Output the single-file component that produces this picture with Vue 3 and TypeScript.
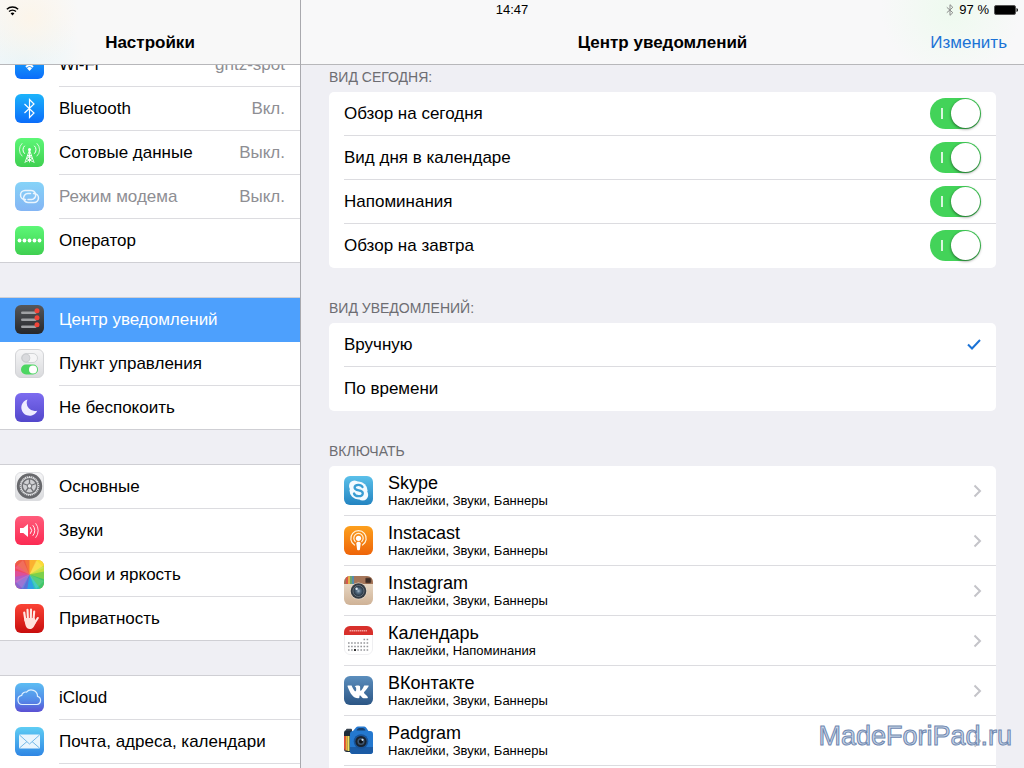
<script setup lang="ts">
import { ref } from 'vue'

interface MenuItem {
  icon: string
  label: string
  value?: string
  disabled?: boolean
}

interface AppItem {
  icon: string
  name: string
  styles: string
}

const menu: MenuItem[][] = [
  [
    { icon: 'wifi', label: 'Wi-Fi', value: 'gritz-spot' },
    { icon: 'bluetooth', label: 'Bluetooth', value: 'Вкл.' },
    { icon: 'cellular', label: 'Сотовые данные', value: 'Выкл.' },
    { icon: 'hotspot', label: 'Режим модема', value: 'Выкл.', disabled: true },
    { icon: 'carrier', label: 'Оператор' },
  ],
  [
    { icon: 'notifications', label: 'Центр уведомлений' },
    { icon: 'control', label: 'Пункт управления' },
    { icon: 'dnd', label: 'Не беспокоить' },
  ],
  [
    { icon: 'general', label: 'Основные' },
    { icon: 'sounds', label: 'Звуки' },
    { icon: 'wallpaper', label: 'Обои и яркость' },
    { icon: 'privacy', label: 'Приватность' },
  ],
  [
    { icon: 'icloud', label: 'iCloud' },
    { icon: 'mail', label: 'Почта, адреса, календари' },
  ],
]

const active = ref('notifications')

const today = ref([
  { id: 'summary', label: 'Обзор на сегодня', on: true },
  { id: 'day', label: 'Вид дня в календаре', on: true },
  { id: 'reminders', label: 'Напоминания', on: true },
  { id: 'tomorrow', label: 'Обзор на завтра', on: true },
])

const sortModes = [
  { id: 'manual', label: 'Вручную' },
  { id: 'time', label: 'По времени' },
]
const sortMode = ref('manual')

const full = 'Наклейки, Звуки, Баннеры'
const apps: AppItem[] = [
  { icon: 'skype', name: 'Skype', styles: full },
  { icon: 'instacast', name: 'Instacast', styles: full },
  { icon: 'instagram', name: 'Instagram', styles: full },
  { icon: 'calendar', name: 'Календарь', styles: 'Наклейки, Напоминания' },
  { icon: 'vk', name: 'ВКонтакте', styles: full },
  { icon: 'padgram', name: 'Padgram', styles: full },
]
</script>

<template>
  <div class="screen">
    <svg class="sprite" width="0" height="0" aria-hidden="true">
      <defs>
        <linearGradient id="g-blue" x1="0" y1="0" x2="0" y2="1"><stop offset="0" stop-color="#1cb4fb" /><stop offset="1" stop-color="#0b6cfa" /></linearGradient>
        <linearGradient id="g-green" x1="0" y1="0" x2="0" y2="1"><stop offset="0" stop-color="#5df777" /><stop offset="1" stop-color="#3fcf50" /></linearGradient>
        <linearGradient id="g-pale" x1="0" y1="0" x2="0" y2="1"><stop offset="0" stop-color="#86d3f8" /><stop offset="1" stop-color="#84b5f4" /></linearGradient>
        <linearGradient id="g-dark" x1="0" y1="0" x2="0" y2="1"><stop offset="0" stop-color="#55575b" /><stop offset="1" stop-color="#26272a" /></linearGradient>
        <linearGradient id="g-light" x1="0" y1="0" x2="0" y2="1"><stop offset="0" stop-color="#f6f6f7" /><stop offset="1" stop-color="#d9dadd" /></linearGradient>
        <linearGradient id="g-violet" x1="0" y1="0" x2="0" y2="1"><stop offset="0" stop-color="#7d6cf0" /><stop offset="1" stop-color="#5247cb" /></linearGradient>
        <linearGradient id="g-pink" x1="0" y1="0" x2="0" y2="1"><stop offset="0" stop-color="#ff5c7b" /><stop offset="1" stop-color="#fb2a52" /></linearGradient>
        <linearGradient id="g-red" x1="0" y1="0" x2="0" y2="1"><stop offset="0" stop-color="#fb4436" /><stop offset="1" stop-color="#c80d0d" /></linearGradient>
        <linearGradient id="g-cloud" x1="0" y1="0" x2="0" y2="1"><stop offset="0" stop-color="#5cbdf3" /><stop offset="0.6" stop-color="#538be8" /><stop offset="1" stop-color="#5b4fd3" /></linearGradient>
        <linearGradient id="g-mail" x1="0" y1="0" x2="0" y2="1"><stop offset="0" stop-color="#5fcdf4" /><stop offset="1" stop-color="#2f86e4" /></linearGradient>
        <linearGradient id="g-skype" x1="0" y1="0" x2="0" y2="1"><stop offset="0" stop-color="#5bc0ea" /><stop offset="1" stop-color="#2384c1" /></linearGradient>
        <linearGradient id="g-orange" x1="0" y1="0" x2="0" y2="1"><stop offset="0" stop-color="#fda01d" /><stop offset="1" stop-color="#ee6409" /></linearGradient>
        <linearGradient id="g-vk" x1="0" y1="0" x2="0" y2="1"><stop offset="0" stop-color="#5b8ebd" /><stop offset="1" stop-color="#2c5685" /></linearGradient>
        <linearGradient id="g-cream" x1="0" y1="0" x2="0" y2="1"><stop offset="0" stop-color="#efe3d2" /><stop offset="1" stop-color="#cfb296" /></linearGradient>
        <radialGradient id="g-lens"><stop offset="0" stop-color="#a8bccb" /><stop offset="0.35" stop-color="#5a7186" /><stop offset="1" stop-color="#1d2a37" /></radialGradient>
        <clipPath id="tile"><rect width="29" height="29" rx="6" /></clipPath>
      </defs>

      <symbol id="i-wifi" viewBox="0 0 29 29">
        <rect width="29" height="29" rx="6" fill="url(#g-blue)" />
        <g fill="none" stroke="#fff" stroke-width="2">
          <path d="M5 11a13.500 13.500 0 0 1 19 0" /><path d="M8 14.200a9.300 9.300 0 0 1 13 0" /><path d="M11 17a5 5 0 0 1 7 0" />
        </g>
        <path d="M12 18.200a3.600 3.600 0 0 1 5 0L14.500 21z" fill="#fff" />
      </symbol>

      <symbol id="i-bluetooth" viewBox="0 0 29 29">
        <rect width="29" height="29" rx="6" fill="url(#g-blue)" />
        <path d="M9.500 10l9.500 9-4.500 4.500v-18L19 10l-9.500 9" fill="none" stroke="#fff" stroke-width="1.200" />
      </symbol>

      <symbol id="i-cellular" viewBox="0 0 29 29">
        <rect width="29" height="29" rx="6" fill="url(#g-green)" />
        <g fill="none" stroke="#fff" stroke-linecap="round">
          <path d="M7 5.500a8.500 8.500 0 0 0 0 12.500M22 5.500a8.500 8.500 0 0 1 0 12.500" stroke-opacity=".75" />
          <path d="M9.500 8a5 5 0 0 0 0 7.500M19.500 8a5 5 0 0 1 0 7.500" />
          <path d="M14.500 12L10 24.500M14.500 12L19 24.500M14.500 12v12M12.500 17.500h4M11.500 20.500l6 3M17.500 20.500l-6 3M12.500 17.500l5 3M16.500 17.500l-5 3" stroke-width=".9" />
        </g>
        <circle cx="14.500" cy="11.500" r="1.500" fill="#fff" />
      </symbol>

      <symbol id="i-hotspot" viewBox="0 0 29 29">
        <rect width="29" height="29" rx="6" fill="url(#g-pale)" />
        <g fill="none" stroke="#eaf5fe" stroke-width="1.500" stroke-linecap="round">
          <path d="M10.500 17.500H10a4.500 4.500 0 0 1 0-9h6a4.500 4.500 0 0 1 3.500 7.500" />
          <path d="M18.500 11.500h.5a4.500 4.500 0 0 1 0 9h-6a4.500 4.500 0 0 1-3.500-7.300c.9-1.200 2-1.700 3.500-1.700h2.500" />
          <path d="M13 17.500h3.500a3.500 3.500 0 0 0 3-1.500" />
        </g>
      </symbol>

      <symbol id="i-carrier" viewBox="0 0 29 29">
        <rect width="29" height="29" rx="6" fill="url(#g-green)" />
        <g fill="#fff"><circle cx="4.500" cy="14.500" r="1.900" /><circle cx="9.500" cy="14.500" r="1.900" /><circle cx="14.500" cy="14.500" r="1.900" /><circle cx="19.500" cy="14.500" r="1.900" /><circle cx="24.500" cy="14.500" r="1.900" /></g>
      </symbol>

      <symbol id="i-notifications" viewBox="0 0 29 29">
        <rect width="29" height="29" rx="6" fill="url(#g-dark)" />
        <g fill="#a0a1a4"><rect x="6" y="6.500" width="15.500" height="2.600" rx="1.300" /><rect x="6" y="13.500" width="15.500" height="2.600" rx="1.300" /><rect x="6" y="20.500" width="15.500" height="2.600" rx="1.300" /></g>
        <g fill="#f04438"><circle cx="22" cy="5.800" r="2.500" /><circle cx="22" cy="12.800" r="2.500" /><circle cx="22" cy="19.800" r="2.500" /></g>
      </symbol>

      <symbol id="i-control" viewBox="0 0 29 29">
        <rect x=".5" y=".5" width="28" height="28" rx="5.500" fill="url(#g-light)" stroke="#d3d4d7" />
        <rect x="6.500" y="4.500" width="16" height="9" rx="4.500" fill="#f5f5f6" stroke="#c9cbce" stroke-width=".8" />
        <circle cx="11" cy="9" r="4" fill="#d9dadd" stroke="#bfc1c4" stroke-width=".6" />
        <rect x="6" y="15.500" width="17" height="10" rx="5" fill="#4dd662" />
        <circle cx="18" cy="20.500" r="4" fill="#fff" />
      </symbol>

      <symbol id="i-dnd" viewBox="0 0 29 29">
        <rect width="29" height="29" rx="6" fill="url(#g-violet)" />
        <path d="M12.500 6.500a8.300 8.300 0 1 0 9.800 11.200A8.200 8.200 0 0 1 12.500 6.500z" fill="#eeecff" />
      </symbol>

      <symbol id="i-general" viewBox="0 0 29 29">
        <rect x=".5" y=".5" width="28" height="28" rx="5.500" fill="url(#g-light)" stroke="#dcdde0" />
        <circle cx="14.500" cy="14" r="11.300" fill="#e3e4e6" stroke="#68696d" stroke-width="2.800" />
        <circle cx="14.500" cy="14" r="9.300" fill="none" stroke="#77787c" stroke-width="1.200" stroke-dasharray="1 1" />
        <circle cx="14.500" cy="14" r="7.300" fill="#d0d1d4" stroke="#707175" stroke-width="1.600" />
        <path d="M14.500 14V7M14.500 14l6.500-2.500M14.500 14l4.200 5.800M14.500 14l-4.200 5.800M14.500 14L8 11.500" stroke="#707175" stroke-width="1.300" />
        <circle cx="14.500" cy="14" r="2.300" fill="#e3e4e6" stroke="#707175" />
      </symbol>

      <symbol id="i-sounds" viewBox="0 0 29 29">
        <rect width="29" height="29" rx="6" fill="url(#g-pink)" />
        <path d="M5 12h3.300l4.700-4v13l-4.700-4H5z" fill="#fff" />
        <g fill="none" stroke="#fff" stroke-linecap="round"><path d="M15.500 11.500a4.500 4.500 0 0 1 0 6" /><path d="M18 9.500a7.500 7.500 0 0 1 0 10" stroke-opacity=".9" /><path d="M20.800 7.500a11 11 0 0 1 0 14" stroke-opacity=".8" /></g>
      </symbol>

      <symbol id="i-wallpaper" viewBox="0 0 29 29">
        <g clip-path="url(#tile)">
          <rect width="29" height="29" fill="#f59a35" />
          <path d="M14.500 14.500L8-2h8z" fill="#f5743c" /><path d="M14.500 14.500L14.500-2H24z" fill="#fbb22f" />
          <path d="M14.500 14.500L23-2h8v8z" fill="#fbdc38" /><path d="M14.500 14.500L31 4v9z" fill="#c9de3c" />
          <path d="M14.500 14.500L31 11v11z" fill="#7ed04b" /><path d="M14.500 14.500L31 20v11h-6z" fill="#3fc76c" />
          <path d="M14.500 14.500L27 31h-9z" fill="#2cc3b9" /><path d="M14.500 14.500L20 31h-9z" fill="#2e9fe6" />
          <path d="M14.500 14.500L12 31H3z" fill="#5a72d8" /><path d="M14.500 14.500L5 31h-7v-8z" fill="#8d63cf" />
          <path d="M14.500 14.500L-2 25V15z" fill="#b55bc2" /><path d="M14.500 14.500L-2 17V8z" fill="#de4f97" />
          <path d="M14.500 14.500L-2 10V0z" fill="#f04a62" /><path d="M14.500 14.500L-2 2v-4H9z" fill="#ee5a45" />
          <path d="M0 8l14.500 6.500L8 0M21 0l-6.500 14.500L29 8M29 21l-14.500-6.500L21 29M8 29l6.500-14.500L0 21" fill="#fff" fill-opacity=".12" />
        </g>
      </symbol>

      <symbol id="i-privacy" viewBox="0 0 29 29">
        <rect width="29" height="29" rx="6" fill="url(#g-red)" />
        <g fill="none" stroke="#ffe9e4" stroke-width="2.100" stroke-linecap="round"><path d="M9.200 8.500l1.200 8M12.500 5.800l.4 9M16 5.500l-.2 9M19.200 7.500l-.8 9M22.800 14l-3.500 5.500" /></g>
        <path d="M9.300 14h10.100l1.600 3.200c-1 4-2.700 7.800-6.200 7.800-4 0-4.800-4.500-5.500-11z" fill="#ffe2dc" />
      </symbol>

      <symbol id="i-icloud" viewBox="0 0 29 29">
        <rect width="29" height="29" rx="6" fill="url(#g-cloud)" />
        <path d="M7.200 21.500a4.600 4.600 0 0 1-.5-9.100 4 4 0 0 1 4.800-3.300 6.300 6.300 0 0 1 11 4.200 4.200 4.200 0 0 1-.5 8.200z" fill="none" stroke="#dff0ff" stroke-width="1.200" />
      </symbol>

      <symbol id="i-mail" viewBox="0 0 29 29">
        <rect width="29" height="29" rx="6" fill="url(#g-mail)" />
        <rect x="4" y="7.500" width="21" height="14" rx="1" fill="#e9f5fd" />
        <path d="M4.500 8l10 9 10-9M4.500 21l7.500-6.500M24.500 21L17 14.500" fill="none" stroke="#74b9e8" />
      </symbol>

      <symbol id="i-skype" viewBox="0 0 29 29">
        <rect width="29" height="29" rx="6" fill="url(#g-skype)" />
        <circle cx="14.500" cy="14.500" r="9" fill="#f3faff" /><circle cx="10.500" cy="10" r="5.500" fill="#f3faff" /><circle cx="18.700" cy="19" r="5.500" fill="#f3faff" />
        <path d="M18.500 11c-.8-1.500-2.200-2.200-4-2.200-2.300 0-3.900 1-3.900 2.700 0 4.200 8.200 1.600 8.200 5.700 0 1.900-1.800 3-4.300 3-2.200 0-3.900-1-4.500-2.700" fill="none" stroke="#3a9dd3" stroke-width="2.300" stroke-linecap="round" />
      </symbol>

      <symbol id="i-instacast" viewBox="0 0 29 29">
        <rect width="29" height="29" rx="6" fill="url(#g-orange)" />
        <g fill="none" stroke="#fff3dd" stroke-width="1.200" stroke-linecap="round"><path d="M10.500 19a7.700 7.700 0 1 1 8 0" /><path d="M11.200 15.500a4.700 4.700 0 1 1 6.600 0" /></g>
        <circle cx="14.500" cy="12.300" r="2.600" fill="#fff" />
        <path d="M12.300 17.500c0-1.300 1-1.800 2.200-1.800s2.200.5 2.200 1.800l-.7 5.800c-.2 1.400-2.800 1.400-3 0z" fill="#fff" />
      </symbol>

      <symbol id="i-instagram" viewBox="0 0 29 29">
        <g clip-path="url(#tile)">
          <rect width="29" height="29" fill="url(#g-cream)" />
          <rect width="29" height="8" fill="#a5765a" />
          <rect x="2" width="2" height="8" fill="#d8574a" /><rect x="4" width="2" height="8" fill="#e0b24c" /><rect x="6" width="2" height="8" fill="#6da36c" /><rect x="8" width="2" height="8" fill="#568cad" />
          <rect x="21.500" y="2" width="5.500" height="5" rx="1" fill="#3d2c26" stroke="#6b4a3a" stroke-width=".7" />
          <circle cx="14.500" cy="15" r="8.600" fill="#e5d8c8" /><circle cx="14.500" cy="15" r="7.800" fill="#343b43" />
          <circle cx="14.500" cy="15" r="5.500" fill="url(#g-lens)" stroke="#76818b" stroke-width=".8" /><circle cx="12.600" cy="12.800" r="1.200" fill="#dce7f0" />
        </g>
      </symbol>

      <symbol id="i-calendar" viewBox="0 0 29 29">
        <rect x=".5" y=".5" width="28" height="28" rx="5.500" fill="#fff" stroke="#efeff1" />
        <path d="M0 9V6a6 6 0 0 1 6-6h17a6 6 0 0 1 6 6v3z" fill="#d8302b" />
        <path d="M5.500 4.800h18" stroke="#f3a09b" stroke-width="1.600" stroke-dasharray="1.500 .5" />
        <g stroke="#95969a" stroke-width="1.600" stroke-dasharray="1.600 1.500"><path d="M19.500 13.500h6M4 17h21.500M4 20.500h21.500M4 24h21.500" /></g>
        <rect x="10" y="23" width="2" height="2" fill="#333" />
      </symbol>

      <symbol id="i-vk" viewBox="0 0 29 29">
        <rect width="29" height="29" rx="6" fill="url(#g-vk)" />
        <path d="M4 9.500h3.600c1 2.500 2 4.400 3.300 5.700.8.500 1.300-.2 1.300-1.700 0-1.900-.3-2.600-1.500-3 .8-1.100 4.900-1.300 5.300-.2.400 1.200-.2 3.600.6 4.800 1-.6 2.600-3.400 3.300-5.100.2-.4.500-.5 1-.5h3.200c1.200 0 .8 1-3.900 6.500-.4.500-.3.900 0 1.300 1 1.100 3.300 2.800 3.600 4 .2.600-.2 1-1 1h-3.200c-1.300 0-2.200-2.100-3.400-2.900-.7-.3-.7 1.100-.8 2.100 0 .5-.4.800-1 .8-5 .2-8.200-4.500-10.800-11.800-.2-.6 0-1 .3-1z" fill="#fff" />
      </symbol>

      <symbol id="i-padgram" viewBox="0 0 29 29">
        <path d="M0 7q0-3 3-3h5l1 22H3q-3 0-3-3z" fill="#1d2b3a" />
        <path d="M0 10h1.500v14.500Q0 24 0 22z" fill="#e8463d" /><rect x="1.500" y="10" width="2" height="14.500" fill="#f7a734" /><rect x="3.500" y="10" width="2" height="15" fill="#e9df62" />
        <path d="M6 8q0-3 3-3l3-3.500q.8-1 2-1h6q1.200 0 2 1L24.500 5H26q3 0 3 3v17q0 3-3 3H9q-3 0-3-3z" fill="#2478cf" />
        <path d="M12.500 4.500q1-2.500 2.500-2.500h4q1.500 0 2.500 2.500z" fill="#17406f" />
        <rect x="2" y="2.800" width="6" height="2" rx="1" fill="#3b4652" /><path d="M6 21h23v4q0 3-3 3H9q-3 0-3-3z" fill="#1b5ba5" />
        <circle cx="17" cy="15.500" r="7.300" fill="#195397" /><circle cx="17" cy="15.500" r="5.600" fill="#1a222d" /><circle cx="17" cy="15.500" r="3.600" fill="#3d5570" /><circle cx="17" cy="15.500" r="2" fill="#0c1117" /><circle cx="18.500" cy="13.800" r="1.100" fill="#d8e6f4" />
      </symbol>
    </svg>

    <div class="status">
      <svg class="status-wifi" width="13" height="11" viewBox="0 0 12 10" role="img" aria-label="Wi-Fi">
        <path d="M.8 3.800a7.500 7.500 0 0 1 10.400 0M2.800 6a4.700 4.700 0 0 1 6.400 0" fill="none" stroke="#000" stroke-width="1.300" />
        <path d="M4.200 7.600a2.700 2.700 0 0 1 3.600 0L6 9.500z" />
      </svg>
      <time>14:47</time>
      <div class="status-end">
        <svg width="8" height="12" viewBox="0 0 8 12" role="img" aria-label="Bluetooth">
          <path d="M.8 3.300l6 5.400L4 11.300V.7l2.800 2.600-6 5.400" fill="none" stroke="#8b8b8b" />
        </svg>
        <span>97 %</span>
        <svg width="24" height="10" viewBox="0 0 24 10" role="img" aria-label="Аккумулятор">
          <rect x=".5" y=".5" width="21" height="9" rx="1.500" fill="#000" stroke="#555" /><path d="M22.500 3q1.500.5 1.500 2t-1.500 2z" />
        </svg>
      </div>
    </div>

    <aside class="pane sidebar">
      <header class="bar bar-side"><h1>Настройки</h1></header>
      <nav class="scroll">
        <ul v-for="(group, g) in menu" :key="g" class="group">
          <li v-for="item in group" :key="item.icon" class="cell" :class="{ active: item.icon === active }">
            <button type="button" class="row" :disabled="item.disabled" @click="active = item.icon">
              <svg class="icon" aria-hidden="true"><use :href="'#i-' + item.icon" /></svg>
              <span class="row-text">
                <span>{{ item.label }}</span>
                <span v-if="item.value" class="value">{{ item.value }}</span>
              </span>
            </button>
          </li>
        </ul>
      </nav>
    </aside>

    <main class="pane detail">
      <header class="bar bar-main">
        <h1>Центр уведомлений</h1>
        <button type="button" class="edit">Изменить</button>
      </header>
      <div class="scroll content">
        <section>
          <h2>ВИД СЕГОДНЯ:</h2>
          <div class="card">
            <label v-for="item in today" :key="item.id" class="option">
              <span>{{ item.label }}</span>
              <input v-model="item.on" type="checkbox" role="switch" class="switch" />
            </label>
          </div>
        </section>
        <section>
          <h2>ВИД УВЕДОМЛЕНИЙ:</h2>
          <div class="card">
            <label v-for="mode in sortModes" :key="mode.id" class="option">
              <span>{{ mode.label }}</span>
              <input v-model="sortMode" type="radio" name="sort" :value="mode.id" class="radio" />
              <svg v-if="mode.id === sortMode" class="check" width="14" height="11" viewBox="0 0 14 11" aria-hidden="true">
                <path d="M1 5.500l4 4L13 1" fill="none" stroke="#1b73d6" stroke-width="2" />
              </svg>
            </label>
          </div>
        </section>
        <section>
          <h2>ВКЛЮЧАТЬ</h2>
          <ul class="card apps">
            <li v-for="app in apps" :key="app.icon">
              <button type="button" class="app">
                <svg class="icon" aria-hidden="true"><use :href="'#i-' + app.icon" /></svg>
                <span class="app-text">
                  <span class="app-name">{{ app.name }}</span>
                  <span class="app-styles">{{ app.styles }}</span>
                </span>
                <svg class="chevron" width="9" height="14" viewBox="0 0 9 14" aria-hidden="true">
                  <path d="M1.500 1.500L7 7l-5.500 5.500" fill="none" stroke="#c4c4c9" stroke-width="2" />
                </svg>
              </button>
            </li>
          </ul>
        </section>
      </div>
    </main>

    <div class="watermark">MadeForiPad.ru</div>
  </div>
</template>

<style>
body {
  margin: 0;
}
</style>

<style scoped>
.screen {
  position: relative;
  display: grid;
  grid-template-columns: 301px minmax(0, 1fr);
  height: 100vh;
  overflow: hidden;
  background: #efeff4;
  color: #000;
  font-family: "Liberation Sans", Arial, sans-serif;
  font-size: 17px;
  line-height: 20px;
}
.screen * {
  box-sizing: border-box;
}
.sprite {
  position: absolute;
}
h1,
h2,
ul {
  margin: 0;
  padding: 0;
  list-style: none;
}
button {
  margin: 0;
  padding: 0;
  border: 0;
  background: none;
  color: inherit;
  font: inherit;
  text-align: left;
}
.status {
  position: absolute;
  inset: 0 0 auto;
  z-index: 1;
  display: grid;
  grid-template-columns: 1fr auto 1fr;
  align-items: center;
  height: 20px;
  padding: 0 6px;
  font-size: 13px;
}
.status-end {
  display: flex;
  justify-content: flex-end;
  align-items: center;
  gap: 5px;
}
.pane {
  display: flex;
  flex-direction: column;
  min-width: 0;
  min-height: 0;
}
.sidebar {
  border-right: 1px solid #a9a9ae;
}
.bar {
  flex: none;
  display: grid;
  grid-template-columns: 1fr auto 1fr;
  align-items: center;
  height: 65px;
  padding: 21px 17px 0;
  border-bottom: 1px solid #b7b7ba;
  background: #f8f8f8;
}
.bar-side {
  background:
    radial-gradient(circle at 30px 18px, #fcf5ea, transparent 50px),
    radial-gradient(circle at 24px 60px, #e9f5f9, transparent 60px),
    #f8f8f8;
}
.bar-main {
  background: radial-gradient(circle at 650px 10px, #eefaef, transparent 70px), #f8f8f9;
}
.bar h1 {
  grid-column: 2;
  font-size: 17px;
  font-weight: 700;
}
.edit {
  justify-self: end;
  color: #1b73d6;
}
.scroll {
  flex: 1;
  min-height: 0;
  overflow: hidden;
}
.group {
  margin-bottom: 34px;
  border-top: 1px solid #cfcfd4;
  background: #fff;
}
.group:first-child {
  margin-top: -23px;
}
.group:last-child {
  padding-bottom: 44px;
}
.row {
  display: flex;
  align-items: flex-start;
  gap: 15px;
  width: 100%;
  height: 44px;
  padding-left: 15px;
}
.icon {
  flex: none;
  width: 29px;
  height: 29px;
}
.row .icon {
  margin-top: 7px;
}
.row-text {
  flex: 1;
  display: flex;
  align-items: center;
  justify-content: space-between;
  height: 44px;
  padding-right: 15px;
  border-bottom: 1px solid #dcdce0;
}
.group:not(:last-child) .cell:last-child {
  border-bottom: 1px solid #cfcfd4;
}
.group:not(:last-child) .cell:last-child .row,
.group:not(:last-child) .cell:last-child .row-text {
  height: 43px;
  border-bottom: 0;
}
.row:disabled,
.value {
  color: #8e8e93;
}
.active {
  background: #4da0fd;
  color: #fff;
}
.active .row-text {
  border-color: transparent;
}
.content {
  padding: 0 28px;
}
section {
  margin-bottom: 32px;
}
section:first-child {
  margin-top: 4px;
}
h2 {
  margin-bottom: 7px;
  color: #6d6d72;
  font-size: 14px;
  font-weight: 400;
  line-height: 16px;
}
.card {
  overflow: hidden;
  padding-left: 15px;
  border-radius: 5px;
  background: #fff;
}
.apps {
  padding-bottom: 50px;
}
.option {
  display: flex;
  align-items: center;
  justify-content: space-between;
  height: 44px;
  padding-right: 15px;
  border-bottom: 1px solid #dcdce0;
}
.option:last-child {
  border-bottom-color: transparent;
}
.switch {
  position: relative;
  appearance: none;
  width: 51px;
  height: 31px;
  margin: 0;
  border-radius: 16px;
  background: #d9d9de;
}
.switch:checked {
  background: #43d359;
}
.switch::before {
  content: "";
  position: absolute;
  top: 10px;
  left: 11px;
  width: 2px;
  height: 11px;
  background: rgba(255, 255, 255, 0.8);
}
.switch::after {
  content: "";
  position: absolute;
  top: 1px;
  left: 1px;
  width: 29px;
  height: 29px;
  border-radius: 50%;
  background: #fff;
  box-shadow: 0 1px 3px rgba(0, 0, 0, 0.55);
}
.switch:checked::after {
  left: 21px;
}
.radio {
  position: absolute;
  appearance: none;
  margin: 0;
}
.app {
  display: flex;
  align-items: center;
  gap: 15px;
  width: 100%;
  height: 50px;
  padding-right: 14px;
  border-bottom: 1px solid #dcdce0;
}
.app-text {
  flex: 1;
  display: flex;
  flex-direction: column;
}
.app-name {
  font-size: 18px;
}
.app-styles {
  font-size: 13px;
  line-height: 16px;
}
.watermark {
  position: absolute;
  right: 12px;
  bottom: 16px;
  color: #c9d6e8;
  font-size: 27px;
  line-height: 32px;
  -webkit-text-stroke: 1px #7088b0;
}
</style>
